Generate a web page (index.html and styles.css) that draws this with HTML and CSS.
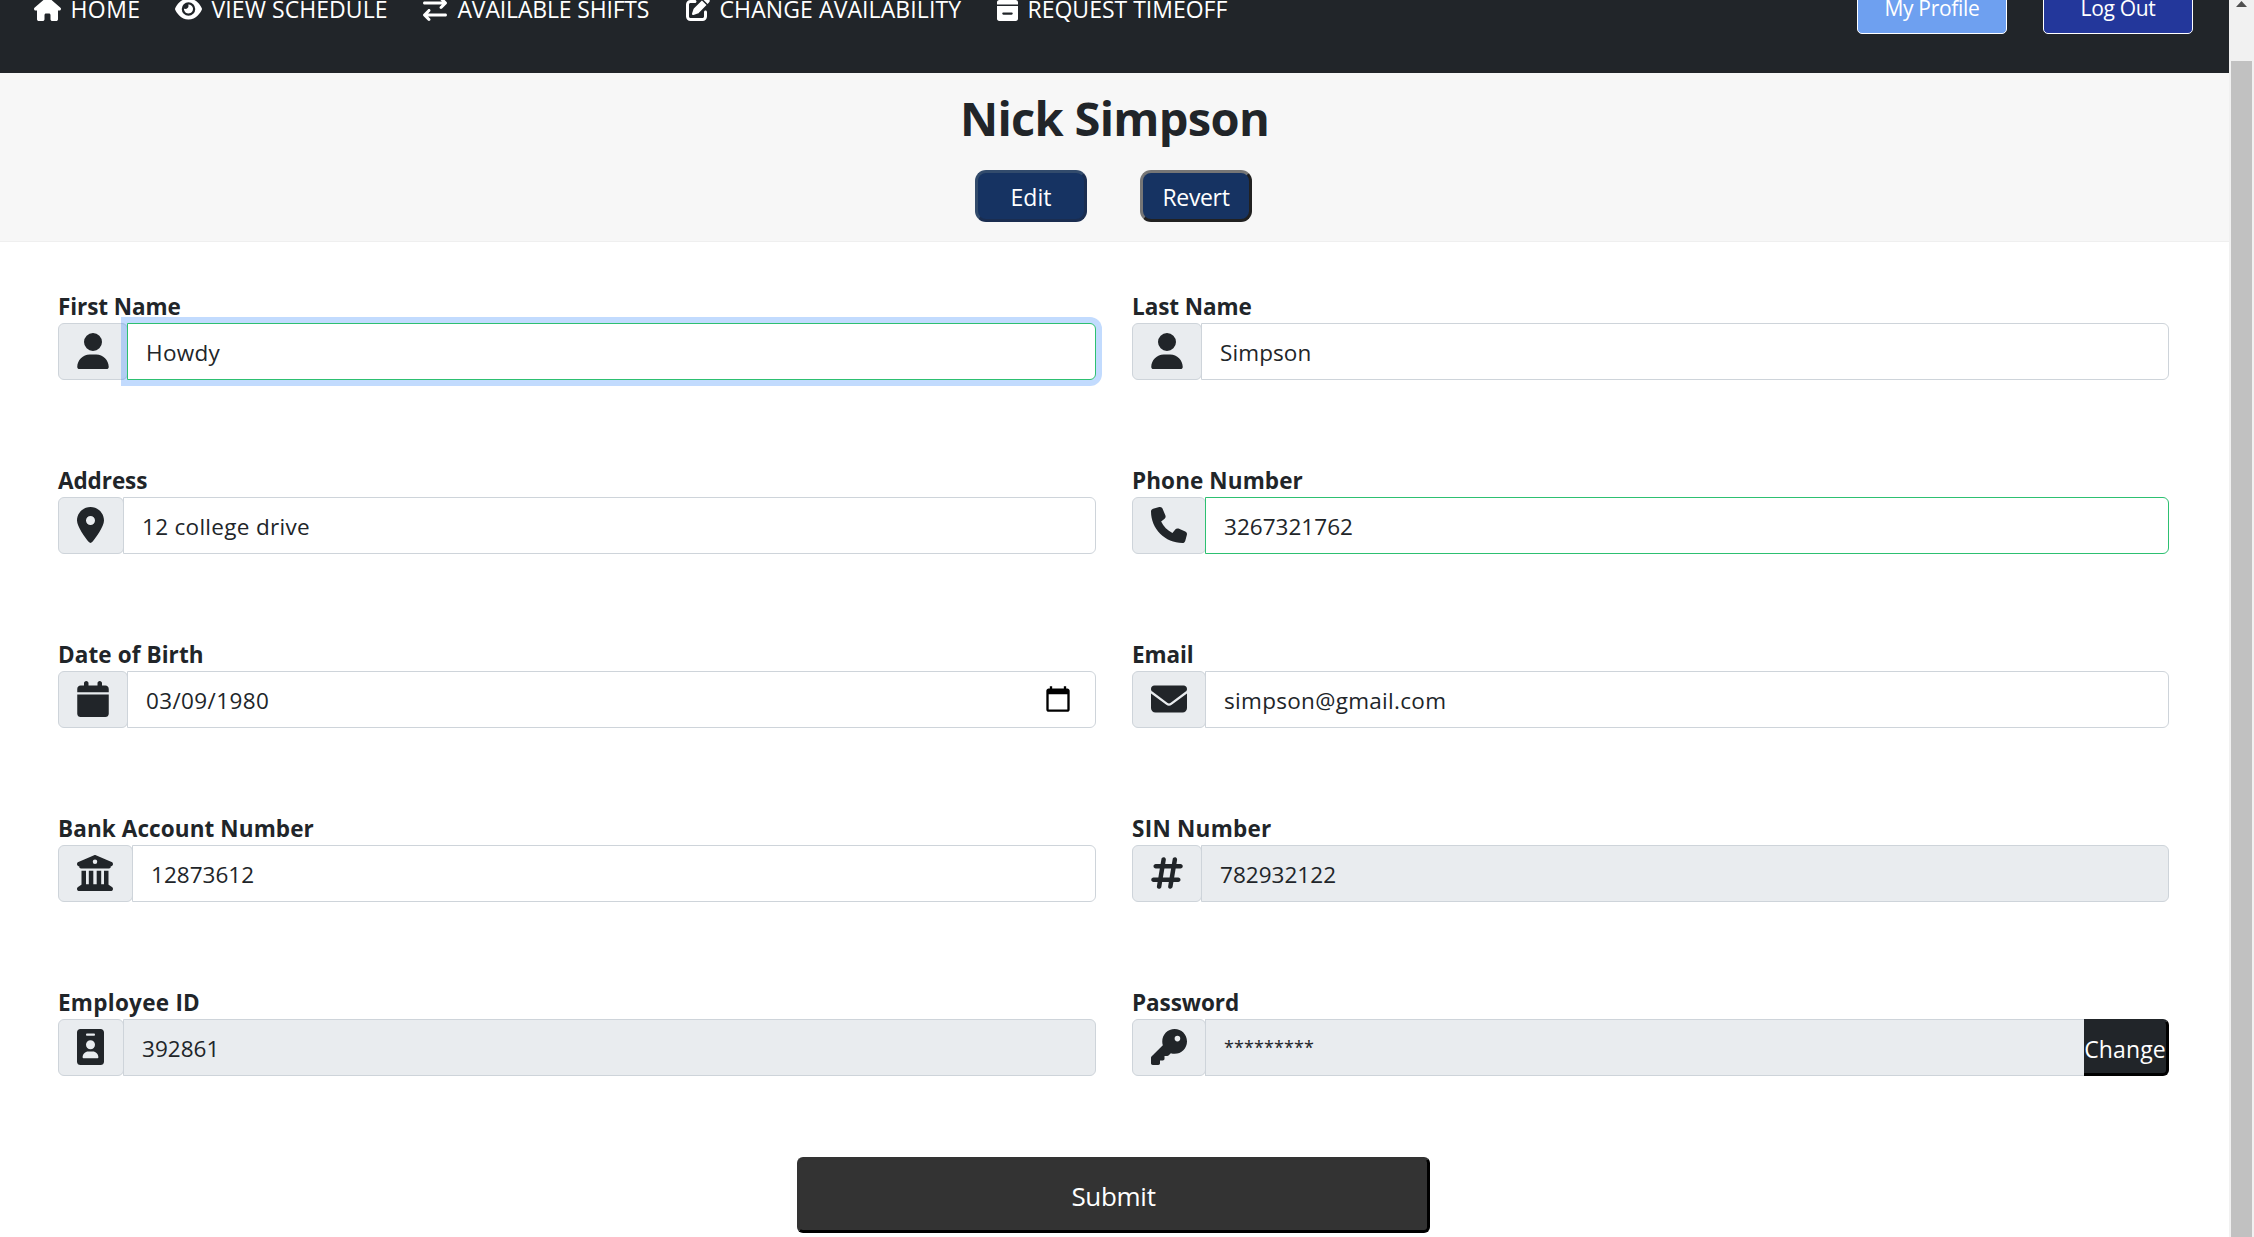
FILE: index.html
```
<!DOCTYPE html>
<html lang="en">
<head>
<meta charset="utf-8">
<title>My Profile</title>
<link rel="stylesheet" href="styles.css">
</head>
<body>
<div class="page">
  <header class="navbar">
    <nav class="nav">
      <a class="nav-item nav-home"><svg width="27" height="24" viewBox="0 0 576 512"><path d="M575.8 255.5c0 18-15 32.1-32 32.1h-32l.7 160.2c0 2.7-.2 5.4-.5 8.1V472c0 22.1-17.9 40-40 40H392c-22.1 0-40-17.9-40-40V384c0-17.7-14.3-32-32-32H256c-17.7 0-32 14.3-32 32v88c0 22.1-17.9 40-40 40H104c-22.1 0-40-17.9-40-40V287.6H32c-18 0-32-14-32-32.1c0-9 3-17 10-24L266.4 8c7-7 15-8 22-8s15 2 21 7L564.8 231.5c8 7 12 15 11 24z"/></svg><span>HOME</span></a>
      <a class="nav-item nav-schedule"><svg width="27" height="24" viewBox="0 0 576 512"><path d="M288 32c-80.8 0-145.5 36.8-192.6 80.6C48.6 156 17.3 208 2.5 243.7c-3.3 7.9-3.3 16.7 0 24.6C17.3 304 48.6 356 95.4 399.4C142.5 443.2 207.2 480 288 480s145.5-36.8 192.6-80.6c46.8-43.5 78.1-95.4 93-131.1c3.3-7.9 3.3-16.7 0-24.6c-14.9-35.7-46.2-87.7-93-131.1C433.5 68.8 368.8 32 288 32zM144 256a144 144 0 1 0 288 0 144 144 0 1 0-288 0zm144-64c0 35.3-28.7 64-64 64c-7.1 0-13.9-1.2-20.3-3.3c-5.5-1.8-11.9 1.6-11.7 7.4c.3 6.9 1.3 13.8 3.2 20.7c13.7 51.2 66.4 81.6 117.6 67.9s81.6-66.4 67.9-117.6c-11.1-41.5-47.8-69.4-88.6-71.1c-5.8-.2-9.2 6.1-7.4 11.7c2.1 6.4 3.3 13.2 3.3 20.3z" fill-rule="evenodd"/></svg><span>VIEW SCHEDULE</span></a>
      <a class="nav-item nav-shifts"><svg width="24" height="24" viewBox="0 0 512 512"><path d="M502.6 150.6c12.5-12.5 12.5-32.8 0-45.3l-96-96c-12.5-12.5-32.8-12.5-45.3 0s-12.5 32.8 0 45.3L402.7 96 32 96C14.3 96 0 110.3 0 128s14.3 32 32 32l370.7 0-41.4 41.4c-12.5 12.5-12.5 32.8 0 45.3s32.8 12.5 45.3 0l96-96zm-397.3 352c12.5 12.5 32.8 12.5 45.3 0s12.5-32.8 0-45.3L109.3 416 480 416c17.7 0 32-14.3 32-32s-14.3-32-32-32l-370.7 0 41.4-41.4c12.5-12.5 12.5-32.8 0-45.3s-32.8-12.5-45.3 0l-96 96c-12.5 12.5-12.5 32.8 0 45.3l96 96z"/></svg><span>AVAILABLE SHIFTS</span></a>
      <a class="nav-item nav-availability"><svg width="24" height="24" viewBox="0 0 512 512"><path d="M471.6 21.7c-21.9-21.9-57.3-21.9-79.2 0L362.3 51.7l97.9 97.9 30.1-30.1c21.9-21.9 21.9-57.3 0-79.2L471.6 21.7zm-299.2 220c-6.1 6.1-10.8 13.6-13.5 21.9l-29.6 88.8c-2.9 8.6-.6 18.1 5.8 24.6s15.9 8.7 24.6 5.8l88.8-29.6c8.2-2.7 15.7-7.4 21.9-13.5L437.7 172.3 339.7 74.3 172.4 241.7zM96 64C43 64 0 107 0 160V416c0 53 43 96 96 96H352c53 0 96-43 96-96V320c0-17.7-14.3-32-32-32s-32 14.3-32 32v96c0 17.7-14.3 32-32 32H96c-17.7 0-32-14.3-32-32V160c0-17.7 14.3-32 32-32h96c17.7 0 32-14.3 32-32s-14.3-32-32-32H96z"/></svg><span>CHANGE AVAILABILITY</span></a>
      <a class="nav-item"><svg width="21" height="24" viewBox="0 0 448 512"><path fill-rule="evenodd" d="M96 32V64H48C21.5 64 0 85.5 0 112v48H448V112c0-26.5-21.5-48-48-48H352V32c0-17.7-14.3-32-32-32s-32 14.3-32 32V64H160V32c0-17.7-14.3-32-32-32S96 14.3 96 32zM448 192H0V464c0 26.5 21.5 48 48 48H400c26.5 0 48-21.5 48-48V192zM312 328c13.3 0 24 10.7 24 24s-10.7 24-24 24H136c-13.3 0-24-10.7-24-24s10.7-24 24-24z"/></svg><span>REQUEST TIMEOFF</span></a>
    </nav>
    <div class="account">
      <a class="account-btn profile">My Profile</a>
      <a class="account-btn logout">Log Out</a>
    </div>
  </header>

  <section class="title-band">
    <h1>Nick Simpson</h1>
    <div class="title-actions">
      <button class="action edit">Edit</button>
      <button class="action revert">Revert</button>
    </div>
  </section>

  <main class="form">
    <div class="fields">
      <div class="field">
        <label>First Name</label>
        <div class="group">
          <span class="addon"><svg width="32" height="36" viewBox="0 0 448 512"><path d="M224 256A128 128 0 1 0 224 0a128 128 0 1 0 0 256zm-45.7 48C79.8 304 0 383.8 0 482.3C0 498.7 13.3 512 29.7 512H418.3c16.4 0 29.7-13.3 29.7-29.7C448 383.8 368.2 304 269.7 304H178.3z"/></svg></span>
          <div class="control valid focused" role="textbox">Howdy</div>
        </div>
      </div>
      <div class="field">
        <label>Last Name</label>
        <div class="group">
          <span class="addon"><svg width="32" height="36" viewBox="0 0 448 512"><path d="M224 256A128 128 0 1 0 224 0a128 128 0 1 0 0 256zm-45.7 48C79.8 304 0 383.8 0 482.3C0 498.7 13.3 512 29.7 512H418.3c16.4 0 29.7-13.3 29.7-29.7C448 383.8 368.2 304 269.7 304H178.3z"/></svg></span>
          <div class="control name" role="textbox">Simpson</div>
        </div>
      </div>
      <div class="field">
        <label>Address</label>
        <div class="group">
          <span class="addon narrow"><svg width="27" height="36" viewBox="0 0 384 512"><path d="M215.7 499.2C267 435 384 279.4 384 192C384 86 298 0 192 0S0 86 0 192c0 87.4 117 243 168.3 307.2c12.3 15.3 35.1 15.3 47.4 0zM192 128a64 64 0 1 1 0 128 64 64 0 1 1 0-128z"/></svg></span>
          <div class="control" role="textbox">12 college drive</div>
        </div>
      </div>
      <div class="field">
        <label class="wide">Phone Number</label>
        <div class="group">
          <span class="addon"><svg width="36" height="36" viewBox="0 0 512 512"><path d="M164.9 24.6c-7.7-18.6-28-28.5-47.4-23.2l-88 24C12.1 30.2 0 46 0 64C0 311.4 200.6 512 448 512c18 0 33.8-12.1 38.6-29.5l24-88c5.3-19.4-4.6-39.7-23.2-47.4l-96-40c-16.3-6.8-35.2-2.1-46.3 11.6L304.7 368C234.3 334.7 177.3 277.7 144 207.3L193.3 167c13.7-11.2 18.4-30 11.6-46.3l-40-96z"/></svg></span>
          <div class="control digits valid" role="textbox">3267321762</div>
        </div>
      </div>
      <div class="field">
        <label class="wide">Date of Birth</label>
        <div class="group">
          <span class="addon"><svg width="32" height="36" viewBox="0 0 448 512"><path d="M96 32V64H48C21.5 64 0 85.5 0 112v48H448V112c0-26.5-21.5-48-48-48H352V32c0-17.7-14.3-32-32-32s-32 14.3-32 32V64H160V32c0-17.7-14.3-32-32-32S96 14.3 96 32zM448 192H0V464c0 26.5 21.5 48 48 48H400c26.5 0 48-21.5 48-48V192z"/></svg></span>
          <div class="control date" role="textbox"><span>03/09/1980</span><svg class="picker" width="28" height="28" viewBox="0 0 24 24"><path d="M20 3h-1V1h-2v2H7V1H5v2H4c-1.1 0-2 .9-2 2v16c0 1.1.9 2 2 2h16c1.1 0 2-.9 2-2V5c0-1.1-.9-2-2-2zm0 18H4V8h16v13z"/></svg></div>
        </div>
      </div>
      <div class="field">
        <label>Email</label>
        <div class="group">
          <span class="addon"><svg width="36" height="36" viewBox="0 0 512 512"><path d="M48 64C21.5 64 0 85.5 0 112c0 15.1 7.1 29.3 19.2 38.4L236.8 313.6c11.4 8.5 27 8.5 38.4 0L492.8 150.4c12.1-9.1 19.2-23.3 19.2-38.4c0-26.5-21.5-48-48-48H48zM0 176V384c0 35.3 28.7 64 64 64H448c35.3 0 64-28.7 64-64V176L294.4 339.2c-22.8 17.1-54 17.1-76.8 0L0 176z"/></svg></span>
          <div class="control" role="textbox">simpson@gmail.com</div>
        </div>
      </div>
      <div class="field">
        <label class="wide">Bank Account Number</label>
        <div class="group">
          <span class="addon narrow"><svg width="36" height="36" viewBox="0 0 512 512"><path d="M243.4 2.6l-224 96c-14 6-21.8 21-18.7 35.8S16.8 160 32 160v8c0 13.3 10.7 24 24 24H456c13.3 0 24-10.7 24-24v-8c15.2 0 28.3-10.7 31.3-25.6s-4.8-29.9-18.7-35.8l-224-96c-8-3.4-17.2-3.4-25.2 0zM128 224H64V420.3c-.6 .3-1.2 .7-1.8 1.1l-48 32c-11.7 7.8-17 22.4-12.9 35.9S17.9 512 32 512H480c14.1 0 26.5-9.2 30.6-22.7s-1.1-28.1-12.9-35.9l-48-32c-.6-.4-1.2-.7-1.8-1.1V224H384V416H344V224H280V416H232V224H168V416H128V224zM256 64a32 32 0 1 1 0 64 32 32 0 1 1 0-64z"/></svg></span>
          <div class="control digits" role="textbox">12873612</div>
        </div>
      </div>
      <div class="field">
        <label class="wider">SIN Number</label>
        <div class="group">
          <span class="addon"><svg width="32" height="36" viewBox="0 0 448 512"><path d="M181.3 32.4c17.4 2.9 29.2 19.4 26.3 36.8L197.8 128h95.1l11.5-69.3c2.9-17.4 19.4-29.2 36.8-26.3s29.2 19.4 26.3 36.8L357.8 128H416c17.7 0 32 14.3 32 32s-14.3 32-32 32H347.1L325.8 320H384c17.7 0 32 14.3 32 32s-14.3 32-32 32H315.1l-11.5 69.3c-2.9 17.4-19.4 29.2-36.8 26.3s-29.2-19.4-26.3-36.8l9.8-58.7H155.1l-11.5 69.3c-2.9 17.4-19.4 29.2-36.8 26.3s-29.2-19.4-26.3-36.8L90.2 384H32c-17.7 0-32-14.3-32-32s14.3-32 32-32h68.9l21.3-128H64c-17.7 0-32-14.3-32-32s14.3-32 32-32h68.9l11.5-69.3c2.9-17.4 19.4-29.2 36.8-26.3zM187.1 192L165.8 320h95.1l21.3-128H187.1z"/></svg></span>
          <div class="control digits disabled" role="textbox">782932122</div>
        </div>
      </div>
      <div class="field">
        <label class="wider">Employee ID</label>
        <div class="group">
          <span class="addon narrow"><svg width="27" height="36" viewBox="0 0 384 512"><path fill-rule="evenodd" d="M48 0C21.5 0 0 21.5 0 48V464c0 26.5 21.5 48 48 48H336c26.5 0 48-21.5 48-48V48c0-26.5-21.5-48-48-48H48zM144 64h96c8.8 0 16 7.2 16 16s-7.2 16-16 16H144c-8.8 0-16-7.2-16-16s7.2-16 16-16zM192 160a64 64 0 1 1 0 128 64 64 0 1 1 0-128zM80 400c0-44.2 35.8-80 80-80h64c44.2 0 80 35.8 80 80c0 8.8-7.2 16-16 16H96c-8.8 0-16-7.2-16-16z"/></svg></span>
          <div class="control digits disabled" role="textbox">392861</div>
        </div>
      </div>
      <div class="field">
        <label>Password</label>
        <div class="group">
          <span class="addon"><svg width="36" height="36" viewBox="0 0 512 512"><path d="M336 352c97.2 0 176-78.8 176-176S433.2 0 336 0S160 78.8 160 176c0 18.7 2.9 36.8 8.3 53.7L7 391c-4.5 4.5-7 10.6-7 17v80c0 13.3 10.7 24 24 24h80c13.3 0 24-10.7 24-24V448h40c13.3 0 24-10.7 24-24V384h40c6.4 0 12.5-2.5 17-7l33.3-33.3c16.9 5.4 35 8.3 53.7 8.3zM376 96a40 40 0 1 1 0 80 40 40 0 1 1 0-80z"/></svg></span>
          <div class="control password disabled" role="textbox">*********</div>
          <button class="change">Change</button>
        </div>
      </div>
    </div>
    <button class="submit">Submit</button>
  </main>
</div>
<aside class="scrollbar">
  <svg width="25" height="20" viewBox="0 0 25 20"><path d="M7 7h11L12.500 1z"/></svg>
  <div class="thumb"></div>
</aside>
</body>
</html>
```
FILE: styles.css
```
* { box-sizing: border-box; }

body {
  margin: 0;
  height: 1237px;
  display: flex;
  overflow: hidden;
  background: #fff;
  color: #212529;
  font-family: "Open Sans", "Noto Sans", sans-serif;
  font-size: 22.5px;
}

button { font-family: inherit; padding: 0; }
svg { display: block; fill: currentColor; flex: none; }

.page { width: 2229px; flex: none; }

/* Navigation, scrolled partly out of view */
.navbar {
  height: 128px;
  margin-top: -55px;
  padding: 0 36px 0 34px;
  display: flex;
  align-items: center;
  justify-content: space-between;
  background: #212529;
  color: #fff;
}
.nav { display: flex; font-size: 23px; line-height: 32px; padding-bottom: 1px; }
.nav-item { display: flex; align-items: center; gap: 9.5px; white-space: nowrap; }
.nav-home { width: 141px; letter-spacing: .4px; }
.nav-schedule { width: 248px; letter-spacing: .07px; }
.nav-shifts { width: 263px; letter-spacing: -.17px; gap: 10.5px; }
.nav-availability { width: 311px; letter-spacing: .1px; }

.account { display: flex; gap: 36px; padding-bottom: 1px; }
.account-btn {
  width: 150px;
  height: 51px;
  border: 1px solid #fff;
  border-radius: 5px;
  font-size: 21px;
  line-height: 49px;
  letter-spacing: -.3px;
  text-align: center;
}
.profile { background: #6ea0f0; }
.logout { background: #23379b; }

/* Employee name and actions */
.title-band {
  height: 169px;
  background: #f7f7f7;
  border-bottom: 1px solid #efefef;
  text-align: center;
}
h1 {
  margin: 0 0 7px;
  font-size: 47px;
  line-height: 90px;
  letter-spacing: -.7px;
  font-weight: 700;
}
.title-actions { display: flex; justify-content: center; gap: 53px; padding-right: 2px; }
.action {
  width: 112px;
  height: 52px;
  padding-top: 1px;
  border-radius: 11px;
  background: #163362;
  color: #fff;
  font-size: 23px;
}
.edit { border: 3px solid; border-color: #324b6c #1a2d50 #1a2d50 #324b6c; }
.revert { border: 3px solid; border-color: #767676 #212121 #212121 #767676; letter-spacing: -.35px; }

/* Profile form */
.form { padding: 47px 60px 0 58px; }
.fields {
  display: grid;
  grid-template-columns: 1038px 1037px;
  column-gap: 36px;
  row-gap: 83px;
}
label { display: block; height: 34px; line-height: 36px; font-weight: 700; letter-spacing: -.08px; }
.wide { letter-spacing: .1px; }
.wider { letter-spacing: .27px; }
.group { display: flex; height: 57px; }
.addon {
  padding: 9px 18px 0;
  border: 1px solid #ced4da;
  border-radius: 6px;
  background: #e9ecef;
}
.narrow { padding-right: 19px; }
.control {
  flex: 1;
  margin-left: -1px;
  padding: 1px 18px 0;
  border: 1px solid #ced4da;
  border-radius: 0 6px 6px 0;
  background: #fff;
  line-height: 56px;
  letter-spacing: .3px;
}
.name { letter-spacing: .1px; }
.digits { letter-spacing: .03px; }
.date { display: flex; justify-content: space-between; padding-right: 23px; letter-spacing: .38px; }
.picker { color: #000; margin-top: 12px; }
.valid { border-color: #2dc071; }
.focused { box-shadow: 0 0 0 6px rgba(13, 110, 253, .25); }
.disabled { background: #e9ecef; }
.password { border-radius: 0; border-right: 0; font-size: 18px; line-height: 52px; letter-spacing: .1px; }
.change {
  width: 85px;
  padding-top: 2px;
  border: 3px solid;
  border-color: #212529 #000 #000 #212529;
  border-left-width: 0;
  border-radius: 0 6px 6px 0;
  background: #212529;
  color: #fff;
  font-size: 23px;
  letter-spacing: .1px;
}
.submit {
  display: block;
  width: 633px;
  height: 76px;
  margin: 81px auto 0;
  padding-top: 1px;
  border: 3px solid;
  border-color: #333 #000 #000 #333;
  border-radius: 6px;
  background: #333;
  color: #fff;
  font-size: 26px;
  letter-spacing: -.3px;
}

/* Window scrollbar */
.scrollbar { width: 25px; flex: none; background: #f1f1f1; color: #505050; }
.thumb { width: 21px; height: 1176px; margin: 41px 0 0 2px; background: #c1c1c1; }
```
